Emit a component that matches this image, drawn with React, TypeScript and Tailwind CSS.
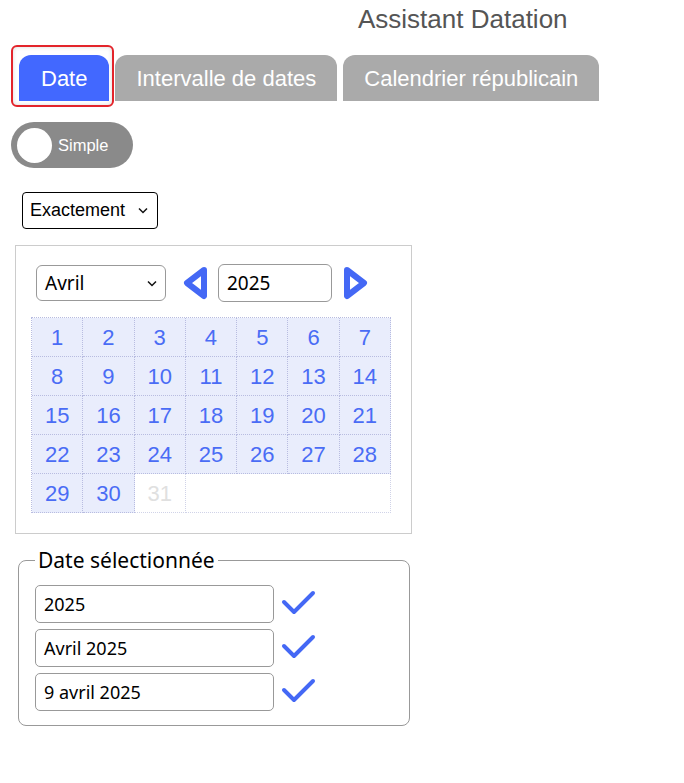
import React from "react";

const Check = () => (
  <svg width="36" height="28" viewBox="0 0 36 28" className="shrink-0">
    <path d="M3 12 L13 22 L32 3" fill="none" stroke="#4468f5" strokeWidth="4" strokeLinecap="round" strokeLinejoin="round" />
  </svg>
);

const LeftTri = () => (
  <svg width="26" height="34" viewBox="0 0 26 34">
    <path d="M21 4 L4 17 L21 30 Z" fill="none" stroke="#4468f5" strokeWidth="6" strokeLinejoin="round" />
  </svg>
);
const RightTri = () => (
  <svg width="26" height="34" viewBox="0 0 26 34">
    <path d="M5 4 L22 17 L5 30 Z" fill="none" stroke="#4468f5" strokeWidth="6" strokeLinejoin="round" />
  </svg>
);

const Chevron = () => (
  <svg width="10" height="7" viewBox="0 0 10 7">
    <path d="M1 1.5 L5 5.5 L9 1.5" fill="none" stroke="#111" strokeWidth="1.5" />
  </svg>
);

export default function App() {
  const days = Array.from({ length: 30 }, (_, i) => i + 1);
  return (
    <div className="w-[684px] h-[783px] bg-white font-['Liberation_Sans',Arial,sans-serif] text-black overflow-hidden">
      <h1 className="pl-[358px] pt-[4px] text-[26px] leading-[30px] text-[#555] font-normal">Assistant Datation</h1>

      <div className="flex gap-[6px] pl-[19px] mt-[21px]">
        <div className="relative">
          <span className="absolute -left-[8px] -right-[5px] -top-[10px] -bottom-[6px] border-2 border-[#e3242b] rounded-[6px] shadow-[inset_0_0_4px_rgba(0,0,0,0.15)]"></span>
          <div className="h-[46px] px-[22px] rounded-t-[12px] bg-[#4268ff] text-white text-[22px] flex items-center">Date</div>
        </div>
        <div className="h-[46px] px-[21px] rounded-t-[12px] bg-[#aaaaaa] text-white text-[22px] flex items-center">Intervalle de dates</div>
        <div className="h-[46px] px-[21px] rounded-t-[12px] bg-[#aaaaaa] text-white text-[22px] flex items-center">Calendrier républicain</div>
      </div>

      <div className="mt-[21px] ml-[11px] w-[122px] h-[46px] rounded-full bg-[#8a8a8a] flex items-center px-[6px]">
        <div className="w-[35px] h-[35px] rounded-full bg-white"></div>
        <span className="ml-[6px] text-[16.5px] text-white">Simple</span>
      </div>

      <div className="mt-[24px] ml-[22px] w-[136px] h-[37px] border border-black rounded-[4px] flex items-center justify-between pl-[7px] pr-[9px] text-[18px]">
        <span>Exactement</span>
        <Chevron />
      </div>

      <div className="mt-[16px] ml-[15px] w-[397px] h-[289px] border border-[#cccccc] px-[15px] pt-[18px]">
        <div className="flex items-center ml-[5px] h-[38px]">
          <div className="w-[130px] h-[36px] border border-[#999] rounded-[6px] flex items-center justify-between pl-[8px] pr-[8px] text-[19px] font-['Noto_Sans',sans-serif]">
            <span>Avril</span>
            <Chevron />
          </div>
          <div className="ml-[17px]"><LeftTri /></div>
          <div className="ml-[9px] w-[114px] h-[38px] border border-[#999] rounded-[6px] flex items-center px-[8px] text-[19px] font-['Noto_Sans',sans-serif]">2025</div>
          <div className="ml-[10px]"><RightTri /></div>
        </div>

        <div className="mt-[15px] w-[360px] grid grid-cols-7 border-t border-l border-dotted border-[#b8bce0]">
          {days.map((d) => (
            <div key={d} className="h-[39px] bg-[#e9edfc] border-r border-b border-dotted border-[#b8bce0] flex items-center justify-center text-[22px] text-[#4a6cf5]">
              {d}
            </div>
          ))}
          <div className="h-[39px] bg-white border-r border-b border-dotted border-[#d0d3e8] flex items-center justify-center text-[22px] text-[#e0e0e0]">31</div>
          <div className="col-span-4 h-[39px] bg-white border-r border-b border-dotted border-[#d0d3e8]"></div>
        </div>
      </div>

      <fieldset className="mt-[13px] ml-[18px] w-[392px] h-[179px] border border-[#999] rounded-[8px] px-[16px] pb-[12px] font-['Noto_Sans',sans-serif]">
        <legend className="px-[3px] text-[21px] leading-[26px]">Date sélectionnée</legend>
        <div className="flex flex-col gap-[6px] mt-[12px]">
          {["2025", "Avril 2025", "9 avril 2025"].map((t) => (
            <div key={t} className="flex items-center gap-[7px]">
              <div className="w-[239px] h-[38px] border border-[#999] rounded-[5px] flex items-center px-[8px] text-[18px]">{t}</div>
              <Check />
            </div>
          ))}
        </div>
      </fieldset>
    </div>
  );
}
